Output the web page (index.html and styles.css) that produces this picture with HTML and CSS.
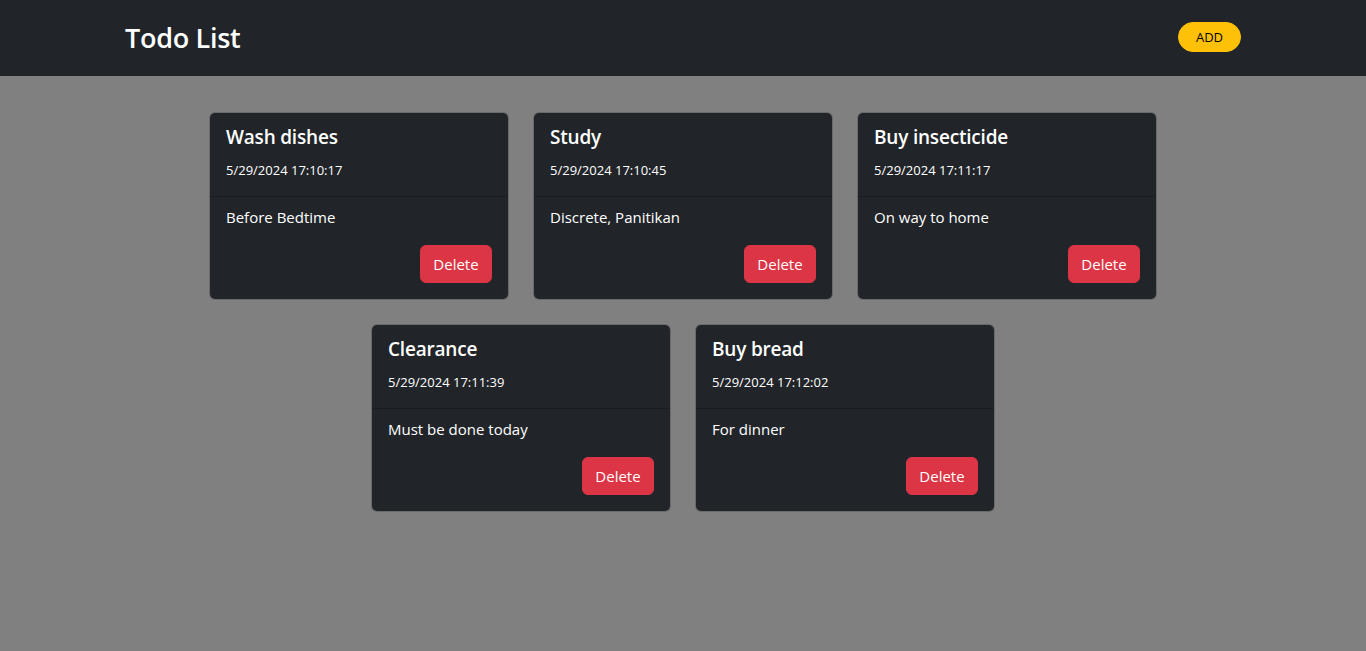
FILE: index.html
```html
<!DOCTYPE html>
<html lang="en">
<head>
<meta charset="utf-8">
<title>Todo List</title>
<link rel="stylesheet" href="styles.css">
</head>
<body>
<header class="navbar">
  <div class="container nav-inner">
    <h1 class="brand">Todo List</h1>
    <button class="btn-add">ADD</button>
  </div>
</header>
<main class="todo-grid">
  <div class="card">
    <div class="card-head">
      <h5 class="card-title">Wash dishes</h5>
      <div class="card-date">5/29/2024 17:10:17</div>
    </div>
    <div class="card-body">
      <p class="card-text">Before Bedtime</p>
      <div class="card-actions"><button class="btn-delete">Delete</button></div>
    </div>
  </div>
  <div class="card">
    <div class="card-head">
      <h5 class="card-title">Study</h5>
      <div class="card-date">5/29/2024 17:10:45</div>
    </div>
    <div class="card-body">
      <p class="card-text">Discrete, Panitikan</p>
      <div class="card-actions"><button class="btn-delete">Delete</button></div>
    </div>
  </div>
  <div class="card">
    <div class="card-head">
      <h5 class="card-title">Buy insecticide</h5>
      <div class="card-date">5/29/2024 17:11:17</div>
    </div>
    <div class="card-body">
      <p class="card-text">On way to home</p>
      <div class="card-actions"><button class="btn-delete">Delete</button></div>
    </div>
  </div>
  <div class="card">
    <div class="card-head">
      <h5 class="card-title">Clearance</h5>
      <div class="card-date">5/29/2024 17:11:39</div>
    </div>
    <div class="card-body">
      <p class="card-text">Must be done today</p>
      <div class="card-actions"><button class="btn-delete">Delete</button></div>
    </div>
  </div>
  <div class="card">
    <div class="card-head">
      <h5 class="card-title">Buy bread</h5>
      <div class="card-date">5/29/2024 17:12:02</div>
    </div>
    <div class="card-body">
      <p class="card-text">For dinner</p>
      <div class="card-actions"><button class="btn-delete">Delete</button></div>
    </div>
  </div>
</main>
</body>
</html>
```
FILE: styles.css
```css
* { box-sizing: border-box; }
html, body {
  margin: 0;
  padding: 0;
}
body {
  background: #808080;
  font-family: "Open Sans", "Noto Sans", sans-serif;
  color: #fff;
  font-size: 16px;
  line-height: 1.5;
}
.navbar {
  background: #212529;
  height: 76px;
  display: flex;
  align-items: center;
}
.container {
  width: 1140px;
  margin: 0 auto;
  padding: 0 12px;
}
.nav-inner {
  display: flex;
  align-items: center;
  justify-content: space-between;
}
.brand {
  margin: 0;
  font-size: 27px;
  font-weight: 600;
  line-height: 1.2;
  color: #fff;
  letter-spacing: -0.3px;
}
.btn-add {
  background: #ffc107;
  color: #000;
  border: 1px solid #ffc107;
  border-radius: 50rem;
  font-family: inherit;
  font-size: 13px;
  line-height: 20px;
  height: 30px;
  width: 63px;
  padding: 0;
  margin-top: -1px;
}
.todo-grid {
  display: flex;
  flex-wrap: wrap;
  justify-content: center;
  gap: 24px;
  width: 1140px;
  margin: 36px auto 0;
  padding: 0 12px;
}
.card {
  width: 300px;
  background: #212529;
  border: 1px solid rgba(0, 0, 0, 0.175);
  border-radius: 6px;
  background-clip: padding-box;
}
.card-head {
  padding: 12px 16px 15px;
  border-bottom: 1px solid rgba(0, 0, 0, 0.2);
}
.card-title {
  margin: 0 0 11px;
  font-size: 19px;
  font-weight: 600;
  line-height: 24px;
  letter-spacing: -0.2px;
}
.card-date {
  font-size: 13px;
  line-height: 21px;
}
.card-body {
  padding: 8px 16px 16px;
}
.card-text {
  margin: 0 0 16px;
  font-size: 15px;
  line-height: 24px;
}
.card-actions {
  display: flex;
  justify-content: flex-end;
}
.btn-delete {
  background: #dc3545;
  color: #fff;
  border: 1px solid #dc3545;
  border-radius: 6px;
  font-family: inherit;
  font-size: 15px;
  line-height: 24px;
  height: 38px;
  width: 72px;
  padding: 0;
}
```
